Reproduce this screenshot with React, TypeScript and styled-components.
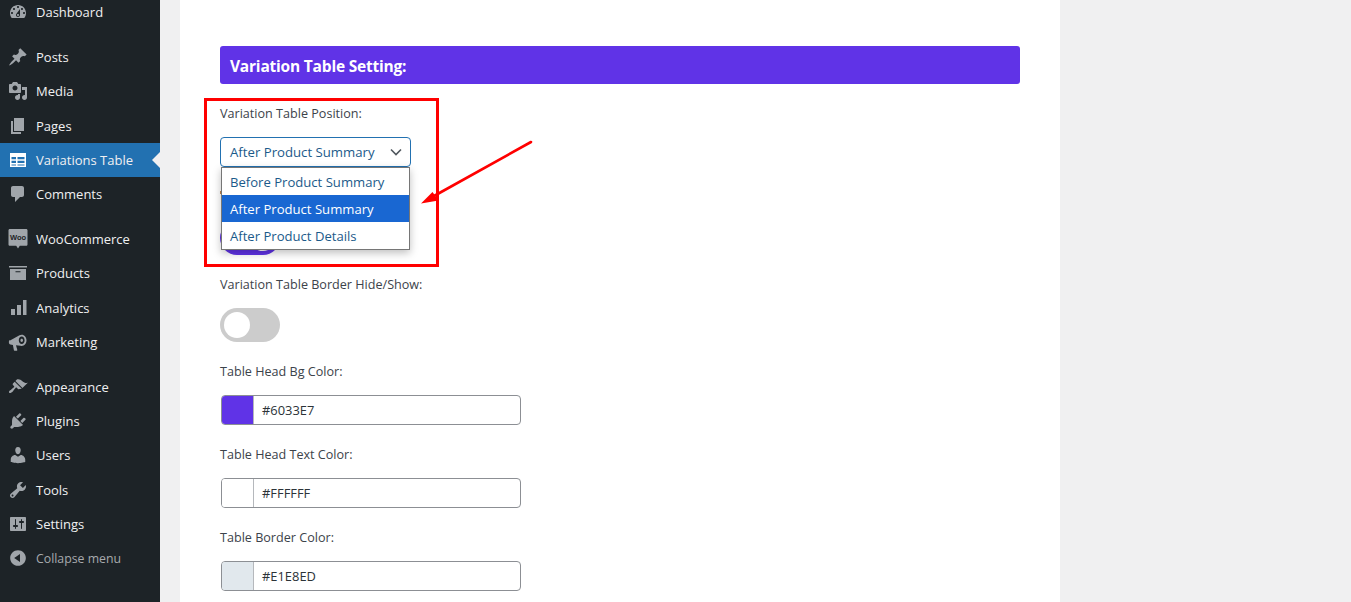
import React from 'react'
import styled, { createGlobalStyle } from 'styled-components'

const GlobalStyle = createGlobalStyle`
  html, body {
    margin: 0;
    padding: 0;
    height: 602px;
    overflow: hidden;
    background: #f0f0f1;
    font-family: "Open Sans", "Noto Sans", "Liberation Sans", sans-serif;
  }
  * { box-sizing: border-box; }
`

const icons: Record<string, React.ReactNode> = {
  dashboard: <path d="M3.76 16h12.48c1.1-1.37 1.76-3.11 1.76-5 0-4.42-3.58-8-8-8s-8 3.58-8 8c0 1.89.66 3.63 1.76 5zM10 4c.55 0 1 .45 1 1s-.45 1-1 1-1-.45-1-1 .45-1 1-1zM6 6c.55 0 1 .45 1 1s-.45 1-1 1-1-.45-1-1 .45-1 1-1zm8 0c.55 0 1 .45 1 1s-.45 1-1 1-1-.45-1-1 .45-1 1-1zm-5.37 5.55L12 7v6c0 1.1-.9 2-2 2s-2-.9-2-2c0-.57.24-1.08.63-1.45zM4 10c.55 0 1 .45 1 1s-.45 1-1 1-1-.45-1-1 .45-1 1-1zm12 0c.55 0 1 .45 1 1s-.45 1-1 1-1-.45-1-1 .45-1 1-1zm-5 3c0-.55-.45-1-1-1s-1 .45-1 1 .45 1 1 1 1-.45 1-1z" />,
  post: <path d="M10.44 3.02l1.82-1.82 6.36 6.35-1.83 1.82c-1.05-.68-2.48-.57-3.41.36l-.75.75c-.92.93-1.04 2.35-.35 3.41l-1.83 1.82-2.41-2.41-2.8 2.79c-.42.42-3.38 2.71-3.8 2.29s1.86-3.39 2.28-3.81l2.79-2.79L4.1 9.36l1.83-1.82c1.05.69 2.48.57 3.4-.36l.75-.75c.93-.92 1.05-2.35.36-3.41z" />,
  media: <path d="M13 11V4c0-.55-.45-1-1-1h-1.67L9 1H5L3.67 3H2c-.55 0-1 .45-1 1v7c0 .55.45 1 1 1h10c.55 0 1-.45 1-1zM7 4.5c1.38 0 2.5 1.12 2.5 2.5S8.38 9.5 7 9.5 4.5 8.38 4.5 7 5.62 4.5 7 4.5zM14 6h5v10.5c0 1.38-1.12 2.5-2.5 2.5S14 17.88 14 16.5s1.12-2.5 2.5-2.5c.17 0 .34.02.5.05V9h-3V6zm-4 8.05V13h2v3.5c0 1.38-1.12 2.5-2.5 2.5S7 17.88 7 16.5 8.12 14 9.5 14c.17 0 .34.02.5.05z" />,
  page: <path d="M6 15V2h10v13H6zm-1 1h8v2H3V5h2v11z" />,
  table: <path fillRule="evenodd" d="M2 3h16v14H2V3zm1.5 4v2.3H8V7H3.500zm6 0v2.300h7V7h-7zm-6 3.700V13H8v-2.300H3.500zm6 0V13h7v-2.300h-7zm-6 3.700v1.100H8v-1.100H3.500zm6 0v1.100h7v-1.100h-7z" />,
  comment: <path d="M5 2h9c1.1 0 2 .9 2 2v7c0 1.1-.9 2-2 2h-2l-5 5v-5H5c-1.1 0-2-.9-2-2V4c0-1.1.9-2 2-2z" />,
  woo: (
    <>
      <path d="M1.800 0h16.400c.7 0 1.300.6 1.300 1.300v14.200c0 .7-.6 1.300-1.300 1.300h-6.400L10 19.500l-1.800-2.700H1.800c-.7 0-1.300-.6-1.300-1.300V1.300C.5.600 1.100 0 1.800 0z" />
      <text x="10" y="11" textAnchor="middle" fontSize="7.500" fontWeight="800" fontFamily="'Liberation Sans', sans-serif" fill="#1d2327">Woo</text>
    </>
  ),
  products: <path fillRule="evenodd" d="M1 3h18v1.600H1V3zm1 3h16v11H2V6zm5.500 2.200v1h5v-1h-5z" />,
  analytics: <path d="M3 11h4v6H3v-6zm6-4h4v10H9V7zm6-5h3.500v15H15V2z" />,
  marketing: <path fillRule="evenodd" d="M2 8.500l9.500-5.200c.6-.4 1.400-.6 2.200-.6 2.700 0 4.800 2.500 4.800 5.600s-2.100 5.700-4.800 5.700c-.4 0-.8-.1-1.200-.2L8 13.200l1.300 4.900c.1.400-.2.700-.5.700H6.500c-.3 0-.6-.2-.6-.5l-1-5.300-2.500-.4c-.9-.2-1.500-1-1.500-2v-.8c0-.7.300-1.400 1.100-1.800zm11.700-3.900c-1.600 0-2.900 1.700-2.900 3.700s1.300 3.800 2.900 3.800 2.900-1.700 2.900-3.800-1.300-3.700-2.900-3.700zm0 2.100c.8 0 1.300.7 1.300 1.600s-.5 1.700-1.300 1.700-1.300-.8-1.300-1.700.5-1.600 1.300-1.600z" />,
  appearance: <path d="M14.480 11.060L7.410 3.990l1.500-1.500c.5-.56 2.300-.47 3.510.32 1.210.8 1.430 1.280 2.910 2.100 1.180.64 2.450 1.260 4.450.85zm-.71.71L6.700 4.700 4.930 6.470c-.39.39-.39 1.020 0 1.410l1.060 1.060c.39.39.39 1.030 0 1.420-.6.6-1.430 1.110-2.210 1.690-.35.26-.7.53-1.010.84C1.430 13.230.4 14.910 1.200 15.700c.79.790 2.480-.23 3.820-1.570.31-.31.58-.66.85-1.020.57-.78 1.080-1.610 1.690-2.210.39-.39 1.020-.39 1.410 0l1.060 1.060c.39.39 1.020.39 1.410 0z" />,
  plugins: <path d="M13.110 4.360L9.870 7.600 8 5.730l3.240-3.240c.35-.34 1.050-.2 1.560.32.52.51.66 1.210.31 1.550zm-8 1.770l.91-1.120 9.010 9.010-1.190.84c-.71.71-2.630 1.160-3.820 1.160H6.140L4.900 17.260c-.59.59-1.540.59-2.120 0-.59-.58-.59-1.530 0-2.120l1.240-1.240v-3.880c0-1.130.4-3.190 1.090-3.890zm7.260 3.970l3.240-3.240c.34-.35 1.040-.21 1.550.31.52.51.66 1.210.31 1.550l-3.240 3.250z" />,
  users: <path d="M10 9.250c-2.270 0-2.730-3.440-2.730-3.440C7 4.020 7.820 2 9.970 2c2.160 0 2.980 2.020 2.710 3.810 0 0-.41 3.440-2.680 3.440zm0 2.570L12.720 10c2.390 0 4.520 2.330 4.520 4.530v2.490s-3.650 1.130-7.240 1.130c-3.650 0-7.240-1.130-7.240-1.130v-2.490c0-2.250 1.940-4.480 4.470-4.480z" />,
  tools: <path d="M16.680 9.770c-1.340 1.340-3.300 1.670-4.950.99l-5.410 6.520c-.99.99-2.590.99-3.580 0s-.99-2.590 0-3.570l6.520-5.420c-.68-1.650-.35-3.610.99-4.950 1.280-1.280 3.120-1.620 4.720-1.060l-2.890 2.890 2.820 2.820 2.860-2.870c.53 1.580.18 3.390-1.080 4.650zM3.810 16.210c.4.39 1.040.39 1.430 0 .4-.4.4-1.040 0-1.430-.39-.4-1.030-.4-1.430 0-.39.39-.39 1.030 0 1.430z" />,
  settings: <path d="M18 16V4c0-.55-.45-1-1-1H3c-.55 0-1 .45-1 1v12c0 .55.45 1 1 1h14c.55 0 1-.45 1-1zM8 11h1c.55 0 1 .45 1 1s-.45 1-1 1H8v1.500c0 .28-.22.5-.5.5s-.5-.22-.5-.5V13H6c-.55 0-1-.45-1-1s.45-1 1-1h1V5.500c0-.28.22-.5.5-.5s.5.22.5.5V11zm5-2h-1c-.55 0-1-.45-1-1s.45-1 1-1h1V5.500c0-.28.22-.5.5-.5s.5.22.5.5V7h1c.55 0 1 .45 1 1s-.45 1-1 1h-1v5.500c0 .28-.22.5-.5.5s-.5-.22-.5-.5V9z" />,
  collapse: <path d="M10 2.160c4.330 0 7.840 3.510 7.840 7.840s-3.510 7.840-7.840 7.840S2.160 14.330 2.160 10 5.710 2.160 10 2.160zm2 11.720V6.120L6.180 9.970z" />,
}

const menu = [
  [{ icon: 'dashboard', label: 'Dashboard' }],
  [
    { icon: 'post', label: 'Posts' },
    { icon: 'media', label: 'Media' },
    { icon: 'page', label: 'Pages' },
    { icon: 'table', label: 'Variations Table', active: true },
    { icon: 'comment', label: 'Comments' },
  ],
  [
    { icon: 'woo', label: 'WooCommerce' },
    { icon: 'products', label: 'Products' },
    { icon: 'analytics', label: 'Analytics' },
    { icon: 'marketing', label: 'Marketing' },
  ],
  [
    { icon: 'appearance', label: 'Appearance' },
    { icon: 'plugins', label: 'Plugins' },
    { icon: 'users', label: 'Users' },
    { icon: 'tools', label: 'Tools' },
    { icon: 'settings', label: 'Settings' },
    { icon: 'collapse', label: 'Collapse menu', muted: true },
  ],
]

const App = () => {
  return (
    <Page>
      <GlobalStyle />
      <Sidebar>
        {menu.map((group, i) => (
          <MenuGroup key={i}>
            {group.map((item: any) => (
              <MenuItem key={item.label} $active={item.active}>
                <MenuIcon viewBox="0 0 20 20" $active={item.active}>{icons[item.icon]}</MenuIcon>
                <MenuLabel $muted={item.muted}>{item.label}</MenuLabel>
              </MenuItem>
            ))}
          </MenuGroup>
        ))}
      </Sidebar>
      <Main>
        <Card>
          <Heading>Variation Table Setting:</Heading>

          <SelectField>
            <Label>Variation Table Position:</Label>
            <SelectWrap>
              <SelectBox>
                After Product Summary
                <Chevron viewBox="0 0 20 20"><path d="M5 7.500l5 5 5-5" /></Chevron>
              </SelectBox>
              <Dropdown>
                <Option>Before Product Summary</Option>
                <Option $selected>After Product Summary</Option>
                <Option>After Product Details</Option>
              </Dropdown>
            </SelectWrap>
          </SelectField>

          {/* label of this one sits behind the open dropdown */}
          <Field>
            <CoveredLabel />
            <Toggle $on />
          </Field>

          <Field>
            <Label>Variation Table Border Hide/Show:</Label>
            <Toggle />
          </Field>

          <Field>
            <Label>Table Head Bg Color:</Label>
            <ColorInput>
              <Swatch $color="#6033E7" />
              <ColorValue>#6033E7</ColorValue>
            </ColorInput>
          </Field>

          <Field>
            <Label>Table Head Text Color:</Label>
            <ColorInput>
              <Swatch $color="#FFFFFF" />
              <ColorValue>#FFFFFF</ColorValue>
            </ColorInput>
          </Field>

          <Field>
            <Label>Table Border Color:</Label>
            <ColorInput>
              <Swatch $color="#E1E8ED" />
              <ColorValue>#E1E8ED</ColorValue>
            </ColorInput>
          </Field>

          <Highlight />
          <Arrow viewBox="0 0 120 70">
            <path d="M111 2L14 56" fill="none" stroke="#f00" strokeWidth="2.600" strokeLinecap="round" />
            <path d="M1 63.500l11.500-11.500 6 8.500z" fill="#f00" />
          </Arrow>
        </Card>
      </Main>
    </Page>
  )
}

export default App

const Page = styled.div`
  display: flex;
  width: 1351px;
  height: 602px;
  overflow: hidden;
  background: #f0f0f1;
`

const Sidebar = styled.nav`
  flex: 0 0 160px;
  background: #1d2327;
  margin-top: -5px;
  height: 607px;
`

const MenuGroup = styled.div`
  margin-bottom: 10.75px;
`

const MenuItem = styled.div<{ $active?: boolean }>`
  position: relative;
  display: flex;
  align-items: center;
  height: 34.25px;
  padding-left: 8px;
  background: ${p => (p.$active ? '#2271b1' : 'transparent')};
  ${p => p.$active && `
    &::after {
      content: '';
      position: absolute;
      right: 0;
      top: 50%;
      margin-top: -8px;
      border: 8px solid transparent;
      border-right-color: #f0f0f1;
    }
  `}
`

const MenuIcon = styled.svg<{ $active?: boolean }>`
  flex: 0 0 20px;
  width: 20px;
  height: 20px;
  fill: ${p => (p.$active ? '#ffffff' : '#a0a5aa')};
`

const MenuLabel = styled.span<{ $muted?: boolean }>`
  margin-left: 8px;
  font-size: ${p => (p.$muted ? '12.3px' : '13px')};
  color: ${p => (p.$muted ? '#a7aaad' : '#f0f0f1')};
  white-space: nowrap;
`

const Main = styled.main`
  flex: 1;
  padding-left: 20px;
`

const Card = styled.div`
  position: relative;
  width: 880px;
  height: 602px;
  background: #fff;
  padding: 46px 40px 0;
`

const Heading = styled.h2`
  margin: 0 0 19px;
  height: 38px;
  line-height: 40px;
  padding-left: 10px;
  background: #6033e7;
  border-radius: 3px;
  color: #fff;
  font-size: 15.5px;
  letter-spacing: -0.2px;
  font-weight: 700;
`

const Field = styled.div`
  margin-bottom: 19px;
`

const SelectField = styled(Field)`
  margin-bottom: 20px;
`

const Label = styled.div`
  height: 20px;
  line-height: 22px;
  margin-bottom: 14px;
  font-size: 12.6px;
  font-weight: 500;
  color: #3c434a;
`

const CoveredLabel = styled(Label)`
  position: relative;
  &::before {
    content: '';
    position: absolute;
    left: 0;
    top: 4px;
    width: 1px;
    height: 3px;
    background: #c98a50;
  }
`

const SelectWrap = styled.div`
  position: relative;
  width: 191px;
`

const SelectBox = styled.div`
  display: flex;
  align-items: center;
  justify-content: space-between;
  height: 30px;
  padding: 0 4px 0 9px;
  border: 1.5px solid #2271b1;
  border-radius: 4px;
  color: #1b5a8a;
  font-size: 13.2px;
  background: #fff;
`

const Chevron = styled.svg`
  width: 20px;
  height: 20px;
  fill: none;
  stroke: #50575e;
  stroke-width: 1.6;
`

const Dropdown = styled.div`
  position: absolute;
  z-index: 2;
  left: 1px;
  top: 30px;
  width: 189px;
  background: #fff;
  border: 1px solid #767676;
  box-shadow: 0 3px 8px rgba(0, 0, 0, 0.25);
`

const Option = styled.div<{ $selected?: boolean }>`
  height: 27px;
  line-height: 28px;
  padding-left: 8px;
  font-size: 13.1px;
  white-space: nowrap;
  color: ${p => (p.$selected ? '#fff' : '#1b5a8a')};
  background: ${p => (p.$selected ? '#1967d2' : '#fff')};
`

const Toggle = styled.div<{ $on?: boolean }>`
  position: relative;
  width: 60px;
  height: 34px;
  border-radius: 17px;
  background: ${p => (p.$on ? '#6033e7' : '#ccc')};
  &::before {
    content: '';
    position: absolute;
    top: 4px;
    left: ${p => (p.$on ? '30px' : '4px')};
    width: 26px;
    height: 26px;
    border-radius: 50%;
    background: #fff;
  }
`

const ColorInput = styled.div`
  display: flex;
  width: 300px;
  height: 30px;
  margin-left: 1px;
  border: 1px solid #8c8f94;
  border-radius: 4px;
  overflow: hidden;
  background: #fff;
`

const Swatch = styled.div<{ $color: string }>`
  flex: 0 0 32px;
  background: ${p => p.$color};
  border-right: 1px solid #b5b8bc;
`

const ColorValue = styled.span`
  padding-left: 8px;
  line-height: 28px;
  font-size: 12.9px;
  color: #2c3338;
`

const Highlight = styled.div`
  position: absolute;
  left: 24px;
  top: 98px;
  width: 235px;
  height: 169px;
  border: 3px solid #f00;
  z-index: 3;
`

const Arrow = styled.svg`
  position: absolute;
  left: 240px;
  top: 140px;
  width: 120px;
  height: 70px;
  z-index: 3;
`
